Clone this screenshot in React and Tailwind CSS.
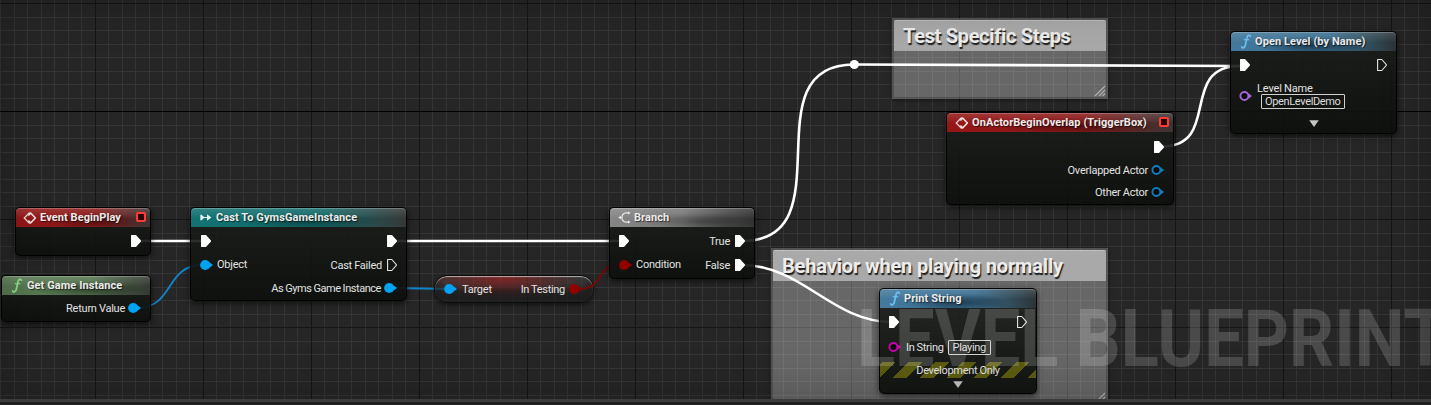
import React from 'react';

const range = (n) => Array.from({ length: n }, (_, i) => i);

function Grid() {
  return (
    <svg className="absolute inset-0" width="1431" height="399" shapeRendering="crispEdges">
      {range(107).map((i) => (
        <rect key={i} x={Math.floor(0.5 + 13.5 * i)} y="0" width="1" height="399" fill="#353535" />
      ))}
      {range(30).map((i) => (
        <rect key={i} x="0" y={Math.floor(3.5 + 13.5 * i)} width="1431" height="1" fill="#353535" />
      ))}
      {range(13).map((i) => (
        <rect key={i} x={95 + 108 * i} y="0" width="1" height="399" fill="#151515" />
      ))}
      {range(4).map((i) => (
        <rect key={i} x="0" y={3 + 108 * i} width="1431" height="1" fill={i === 1 ? '#000' : '#151515'} />
      ))}
    </svg>
  );
}

function Exec({ open }) {
  return (
    <svg width="12" height="14" viewBox="0 0 12 14" className="shrink-0">
      <path
        d="M1.6 1.5H5.8L10.3 6.6Q10.6 7 10.3 7.4L5.8 12.5H1.6Z"
        fill={open ? 'none' : '#fff'}
        stroke={open ? '#e4e4e4' : '#fff'}
        strokeWidth="1.1"
        strokeLinejoin="round"
      />
    </svg>
  );
}

function Dot({ color, open }) {
  return (
    <svg width="14" height="12" viewBox="0 0 14 12" className="shrink-0">
      {open ? (
        <circle cx="5.4" cy="6" r="4" fill="#0a0a0a" stroke={color} strokeWidth="1.9" />
      ) : (
        <circle cx="5.2" cy="6" r="5.1" fill={color} />
      )}
      <path d="M9.6 3.2L13 6L9.6 8.8Z" fill={color} />
    </svg>
  );
}

function EventIcon() {
  return (
    <svg width="14" height="14" viewBox="0 0 14 14" className="shrink-0">
      <path d="M6.6 1.5L1.2 7L6.6 12.5" fill="none" stroke="#e8dada" strokeWidth="1.2" />
      <path d="M5.4 4.6L7.6 2L12.4 7L7.6 12L5.4 9.4" fill="none" stroke="#f0e4e4" strokeWidth="1.6" strokeLinejoin="round" />
    </svg>
  );
}

function CastIcon() {
  return (
    <svg width="12" height="9" viewBox="0 0 12 9" className="shrink-0">
      <path d="M0.9 1.8L4 4.5L0.9 7.2ZM3 4.5H8" fill="#e6f2f2" stroke="#e6f2f2" strokeWidth="1" />
      <path d="M7 1.2L11.4 4.5L7 7.8Z" fill="#e6f2f2" />
    </svg>
  );
}

function BranchIcon() {
  return (
    <svg width="13" height="13" viewBox="0 0 13 13" className="shrink-0">
      <path d="M0.8 6.5H4M11 1.9H8.2Q4 2.2 4 6.5Q4 10.8 8.2 11.1H11" fill="none" stroke="#e6e6e6" strokeWidth="1.2" />
      <path d="M0.4 6.5L3 4.8V8.2ZM10 0.4L12.4 1.9L10 3.4ZM10 9.6L12.4 11.1L10 12.6Z" fill="#f0f0f0" />
    </svg>
  );
}

function FnIcon({ color }) {
  return (
    <svg width="12" height="15" viewBox="0 0 12 15" className="shrink-0">
      <path d="M10.4 2.2Q9.8 0.9 8.5 1.4Q7.2 1.9 6.7 4.8L5.5 10.5Q4.9 13.6 3.2 13.8Q2 13.9 1.7 12.9" fill="none" stroke={color} strokeWidth="1.7" strokeLinecap="round" />
      <path d="M3.8 5.7H9.2" stroke={color} strokeWidth="1.2" />
    </svg>
  );
}

const RED_TONE =
  'bg-[linear-gradient(to_bottom,rgba(255,255,255,0.14),transparent_55%),radial-gradient(ellipse_at_60%_70%,rgba(30,0,0,0.45),transparent_45%),linear-gradient(to_right,#961616,#8a1a1a_60%,#5a2b2b_85%,#3a3433)]';
const GREEN_TONE =
  'bg-[linear-gradient(to_bottom,rgba(255,255,255,0.14),transparent_55%),radial-gradient(ellipse_at_60%_70%,rgba(0,0,0,0.38),transparent_45%),linear-gradient(to_right,#567a50,#54734e_60%,#3f4d3c_85%,#343a32)]';
const TEAL_TONE =
  'bg-[linear-gradient(to_bottom,rgba(255,255,255,0.14),transparent_55%),radial-gradient(ellipse_at_55%_70%,rgba(0,20,20,0.42),transparent_45%),linear-gradient(to_right,#127272,#136a6a_60%,#2b4b4b_85%,#343837)]';
const GRAY_TONE =
  'bg-[linear-gradient(to_bottom,rgba(255,255,255,0.14),transparent_55%),radial-gradient(ellipse_at_65%_70%,rgba(0,0,0,0.3),transparent_45%),linear-gradient(to_right,#868686,#787878_50%,#4c4c4c_80%,#343434)]';
const BLUE_TONE =
  'bg-[linear-gradient(to_bottom,rgba(255,255,255,0.14),transparent_55%),radial-gradient(ellipse_at_50%_70%,rgba(0,10,20,0.5),transparent_48%),linear-gradient(to_right,#437a9d,#3b6e90_60%,#33505f_82%,#2b3438)]';

function Header({ tone, pad, icon, title, delegate }) {
  return (
    <div className={'flex h-[19px] shrink-0 items-center rounded-t-[4px] shadow-[inset_0_1px_0_rgba(255,255,255,0.22)] ' + pad + ' ' + tone}>
      {icon}
      <span className="whitespace-nowrap text-[11px] font-bold leading-[19px] tracking-[0.08px] text-[#ececec] [text-shadow:1px_1px_1px_rgba(0,0,0,0.6)]">{title}</span>
      {delegate && <span className="ml-auto mr-[4px] mt-[-2px] h-[10px] w-[10px] rounded-[2px] border-2 border-[#ff3b36] bg-[#2a0303]" />}
    </div>
  );
}

function Node({ place, children }) {
  return (
    <div className={'absolute flex flex-col rounded-[5px] border border-black/90 bg-linear-to-b from-[#1c1f1b]/90 to-[#0c0f0c]/92 shadow-[0_2px_6px_rgba(0,0,0,0.65)] ' + place}>
      {children}
    </div>
  );
}

function Row({ className = '', children }) {
  return <div className={'flex items-center ' + className}>{children}</div>;
}

function Label({ className = 'tracking-[-0.24px]', children }) {
  return (
    <span className={'whitespace-nowrap pt-[1px] text-[11px] leading-[14px] [word-spacing:-0.3px] text-[#e2e2e2] ' + className}>
      {children}
    </span>
  );
}

function Input({ className, children }) {
  return (
    <span className={'h-[15px] whitespace-nowrap rounded-[1px] border border-[#cfcfcf] text-[11px] leading-[14px] tracking-[-0.35px] text-[#dedede] ' + className}>
      {children}
    </span>
  );
}

function Expander() {
  return (
    <svg width="10" height="7" viewBox="0 0 10 7">
      <path d="M0.2 0.2H9.8L5 7Z" fill="#c4c4c4" />
    </svg>
  );
}

function Grip() {
  return (
    <svg width="12" height="12" viewBox="0 0 12 12" className="shrink-0">
      <path d="M1 11L11 1M5 11L11 5M8.5 11L11 8.5" stroke="#b4b4b4" strokeWidth="1.1" />
    </svg>
  );
}

function Comment({ place, title, spacing, children }) {
  return (
    <div className={'absolute flex flex-col border-2 border-black/20 bg-white/30 bg-clip-border shadow-[0_1px_4px_rgba(0,0,0,0.5)] ' + place}>
      <div className="flex h-[31px] shrink-0 items-center rounded-t-[2px] border-t border-[#c0c0c0] bg-[#a9a9a9] pl-[9px]">
        <span className={'whitespace-nowrap text-[20px] font-bold leading-[30px] text-[#ededed] [text-shadow:1px_2px_1px_rgba(0,0,0,0.85)] ' + spacing}>{title}</span>
      </div>
      {children}
    </div>
  );
}

function Wires() {
  return (
    <svg className="absolute inset-0" width="1431" height="399" fill="none">
      <g stroke="#fff" strokeWidth="2.6">
        <path d="M140 241H203" />
        <path d="M396 241H622" />
        <path d="M742 241C848 241 748 64.5 854 64.5L1240 66" />
        <path d="M742 265C802 265 832 322 892 322" />
        <path d="M1162 146.5C1222 146.5 1178 66 1240 66" />
      </g>
      <circle cx="854.3" cy="64.5" r="4.6" fill="#fff" />
      <path d="M136 308C176 308 163 264.5 205 264.5" stroke="#0f86cc" strokeWidth="1.8" />
      <path d="M393 288L448 289" stroke="#0f86cc" strokeWidth="1.9" />
    </svg>
  );
}

function ConditionWire() {
  return (
    <svg className="absolute inset-0" width="1431" height="399" fill="none">
      <path d="M578 289C606 289 594 264.5 622 264.5" stroke="#7c0606" strokeWidth="1.8" />
    </svg>
  );
}

const BLUE = '#00a2f2';
const RED = '#930000';

export default function App() {
  return (
    <div className="relative flex h-[405px] w-[1431px] flex-col overflow-hidden bg-[#262626] font-[Roboto,sans-serif]">
      <div className="relative h-[399px] w-full shrink-0 overflow-hidden">
        <Grid />

        <Comment place="left-[892px] top-[18px] h-[81px] w-[216px]" title="Test Specific Steps" spacing="tracking-[-0.32px]">
          <div className="flex flex-1 items-end justify-end"><Grip /></div>
        </Comment>
        <Comment place="left-[771px] top-[248px] h-[158px] w-[337px]" title="Behavior when playing normally" spacing="tracking-[-0.16px]">
          <div className="flex flex-1 items-end justify-end"><Grip /></div>
        </Comment>

        <Wires />

        <Node place="left-[15px] top-[207px] h-[49px] w-[136px]">
          <Header tone={RED_TONE} pad="gap-[3px] pl-[7px]" icon={<EventIcon />} title="Event BeginPlay" delegate />
          <Row className="h-[28px] justify-end pr-[8px]"><Exec /></Row>
        </Node>

        <Node place="left-[1px] top-[275px] h-[47px] w-[150px]">
          <Header tone={GREEN_TONE} pad="gap-[4px] pl-[9px]" icon={<FnIcon color="#8fe08a" />} title="Get Game Instance" />
          <Row className="h-[27px] justify-end gap-[3px] pr-[8px]">
            <Label>Return Value</Label>
            <Dot color={BLUE} />
          </Row>
        </Node>

        <Node place="left-[190px] top-[207px] h-[94px] w-[217px]">
          <Header tone={TEAL_TONE} pad="gap-[4px] pl-[9px]" icon={<CastIcon />} title="Cast To GymsGameInstance" />
          <div className="flex justify-between pl-[9px] pr-[8px] pt-[2px]">
            <div className="flex flex-col">
              <Row className="h-[24px]"><Exec /></Row>
              <Row className="h-[23px] gap-[3px]"><Dot color={BLUE} /><Label>Object</Label></Row>
            </div>
            <div className="flex flex-col items-end">
              <Row className="h-[24px]"><Exec /></Row>
              <Row className="h-[24px] gap-[4px]"><Label>Cast Failed</Label><Exec open /></Row>
              <Row className="h-[22px] gap-[3px]"><Label className="tracking-[-0.45px]">As Gyms Game Instance</Label><Dot color={BLUE} /></Row>
            </div>
          </div>
        </Node>

        <div className="absolute left-[434px] top-[275px] flex h-[28px] w-[160px] items-center justify-between rounded-[13px] border border-[#0c0c0c] bg-[radial-gradient(ellipse_at_42%_10%,rgba(150,38,38,0.75),rgba(70,66,66,0.5)_60%,rgba(60,60,60,0.45))] pl-[9px] pr-[10px] shadow-[inset_0_1px_1px_rgba(255,255,255,0.6),inset_0_-14px_6px_rgba(0,0,0,0.4),0_2px_5px_rgba(0,0,0,0.55)]">
          <Row className="gap-[4px]"><Dot color={BLUE} /><Label>Target</Label></Row>
          <Row className="gap-[4px]"><Label className="tracking-[-0.3px]">In Testing</Label><Dot color={RED} /></Row>
        </div>

        <ConditionWire />

        <Node place="left-[609px] top-[207px] h-[72px] w-[146px]">
          <Header tone={GRAY_TONE} pad="gap-[3px] pl-[8px]" icon={<BranchIcon />} title="Branch" />
          <div className="flex justify-between pl-[8px] pr-[8px] pt-[2px]">
            <div className="flex flex-col">
              <Row className="h-[24px]"><Exec /></Row>
              <Row className="h-[23px] gap-[3px] pl-[1px]"><Dot color={RED} /><Label>Condition</Label></Row>
            </div>
            <div className="flex flex-col items-end">
              <Row className="h-[24px] gap-[4px]"><Label>True</Label><Exec /></Row>
              <Row className="h-[24px] gap-[4px]"><Label>False</Label><Exec /></Row>
            </div>
          </div>
        </Node>

        <Node place="left-[946px] top-[112px] h-[93px] w-[228px]">
          <Header tone={RED_TONE} pad="gap-[3px] pl-[8px]" icon={<EventIcon />} title="OnActorBeginOverlap (TriggerBox)" delegate />
          <div className="flex flex-col items-end pr-[8px] pt-[2px]">
            <Row className="h-[25px]"><Exec /></Row>
            <Row className="h-[22px] gap-[3px]"><Label>Overlapped Actor</Label><Dot color="#0b7fc0" open /></Row>
            <Row className="h-[22px] gap-[3px]"><Label>Other Actor</Label><Dot color="#0b7fc0" open /></Row>
          </div>
        </Node>

        <Node place="left-[1230px] top-[31px] h-[103px] w-[167px]">
          <Header tone={BLUE_TONE} pad="gap-[3px] pl-[9px]" icon={<FnIcon color="#6cc0f5" />} title="Open Level (by Name)" />
          <Row className="h-[28px] justify-between pl-[8px] pr-[8px]"><Exec /><Exec open /></Row>
          <Row className="h-[34px] gap-[4px] pl-[8px]">
            <Dot color="#a465d6" open />
            <div className="flex flex-col items-start pb-[2px]">
              <Label className="tracking-[-0.15px]">Level Name</Label>
              <Input className="ml-[4px] mt-[-2px] px-[3px]">OpenLevelDemo</Input>
            </div>
          </Row>
          <Row className="flex-1 justify-center"><Expander /></Row>
        </Node>

        <Node place="left-[879px] top-[288px] h-[106px] w-[158px]">
          <Header tone={BLUE_TONE} pad="gap-[3px] pl-[9px]" icon={<FnIcon color="#6cc0f5" />} title="Print String" />
          <Row className="h-[28px] justify-between pl-[8px] pr-[8px]"><Exec /><Exec open /></Row>
          <Row className="h-[22px] pl-[8px]">
            <Dot color="#d000b0" open />
            <Label className="ml-[4px] tracking-[-0.3px]">In String</Label>
            <Input className="ml-[4px] px-[4px]">Playing</Input>
          </Row>
          <Row className="mt-[4px] h-[16px] justify-center bg-[repeating-linear-gradient(-45deg,#5c5c10_0_6.2px,transparent_6.2px_15.7px,#5c5c10_15.7px_19px)]">
            <Label className="tracking-[-0.3px]">Development Only</Label>
          </Row>
          <Row className="flex-1 justify-center pb-[3px]"><Expander /></Row>
        </Node>

        <div className="absolute left-[857px] top-[292px] origin-left scale-x-88 whitespace-nowrap text-[80px] font-bold leading-[94px] text-white/17">LEVEL BLUEPRINT</div>
        <div className="pointer-events-none absolute inset-0 shadow-[inset_0_0_50px_rgba(0,0,0,0.25)]" />
      </div>
      <div className="h-[3px] w-full shrink-0 bg-[#3c3c3c]" />
      <div className="h-[3px] w-full shrink-0 bg-[#202020]" />
    </div>
  );
}
